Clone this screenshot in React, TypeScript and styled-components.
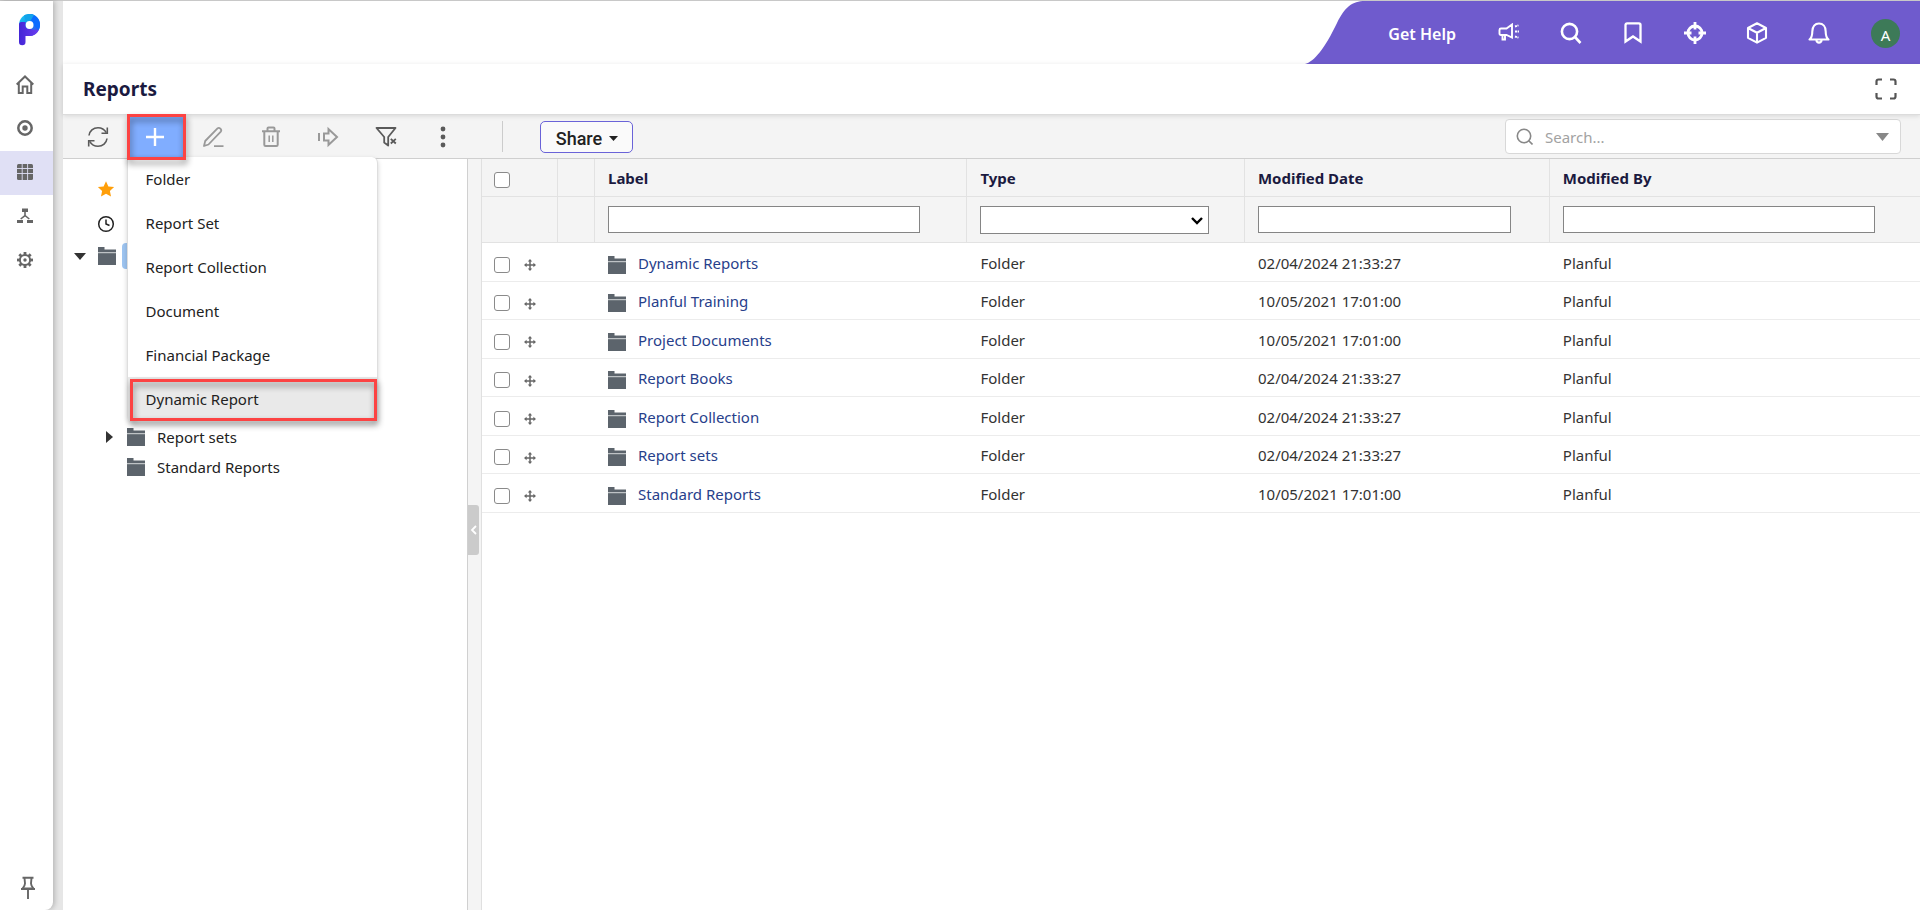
import React from "react";
import styled, { createGlobalStyle, css } from "styled-components";

const GlobalStyle = createGlobalStyle`
  *, *::before, *::after { box-sizing: border-box; }
  html, body, #root { height: 100%; }
  body {
    margin: 0;
    background: #fff;
    color: #222;
    font: 15px/20px "Noto Sans", "Open Sans", sans-serif;
  }
  button, input, select { font: inherit; color: inherit; }
  button { padding: 0; border: 0; background: none; cursor: pointer; }
  svg { display: block; flex: none; }
`;

const Shell = styled.div`
  display: flex;
  min-height: 100%;
  border-top: 1px solid #c8c8c8;
  background: #e6e6e6;
`;

const Rail = styled.nav`
  display: flex;
  flex-direction: column;
  flex: none;
  width: 53px;
  margin-right: 10px;
  background: #fff;
  border-bottom-right-radius: 8px;
  box-shadow: 2px 0 5px rgba(0, 0, 0, 0.2);
`;

const Logo = styled.a`
  display: flex;
  height: 62px;
  padding: 13px 0 0 19px;
`;

const RailButton = styled.button<{ $active?: boolean }>`
  display: flex;
  align-items: center;
  justify-content: center;
  height: 44px;
  padding: 0 4px 2px 0;
  color: #666;
  background: ${(p) => (p.$active ? "#e0e0f5" : "transparent")};
`;

const PinButton = styled(RailButton)`
  margin-top: auto;
  padding: 0 0 0 3px;
`;

const Page = styled.div`
  display: flex;
  flex-direction: column;
  flex: 1;
  min-width: 0;
  background: #fff;
`;

const TopBar = styled.header`
  display: flex;
  justify-content: flex-end;
  height: 63px;
`;

const Swoosh = styled.svg`
  margin-right: -1px;
`;

const TopActions = styled.div`
  display: flex;
  align-items: center;
  padding: 0 20px 0 24px;
  background: #6f5bcd;
  color: #fff;
`;

const HelpLink = styled.a`
  margin-right: 41px;
  padding-top: 3px;
  color: #fff;
  font-size: 16px;
  font-weight: 600;
  text-decoration: none;
`;

const TopButton = styled.button`
  display: flex;
  align-items: center;
  justify-content: center;
  width: 24px;
  height: 24px;
  margin-right: 38px;
`;

const Avatar = styled.button`
  width: 29px;
  height: 29px;
  margin: 2px 0 0 2px;
  padding-top: 2px;
  border-radius: 50%;
  background: #3d7a58;
`;

const TitleRow = styled.div`
  position: relative;
  display: flex;
  align-items: center;
  justify-content: space-between;
  height: 51px;
  padding: 0 23px 0 20px;
  border-bottom: 1px solid #dcdcdc;
  box-shadow: 0 1px 5px rgba(0, 0, 0, 0.12);
  color: #555;
`;

const Title = styled.h1`
  margin: 0;
  color: #1b1a40;
  font-size: 19px;
  line-height: 24px;
  font-weight: 700;
`;

const Toolbar = styled.div`
  display: flex;
  align-items: center;
  height: 44px;
  padding: 0 19px 0 6px;
  background: #f4f4f4;
  border-bottom: 1px solid #cfcfcf;
`;

const Tools = styled.div`
  display: flex;
  width: 403px;
  height: 43px;
`;

const ToolSlot = styled.div`
  position: relative;
  display: flex;
  flex: 1;
`;

const ToolButton = styled.button<{ $tone?: "dim" | "primary" }>`
  display: flex;
  flex: 1;
  align-items: center;
  justify-content: center;
  color: ${(p) => (p.$tone === "dim" ? "#999" : p.$tone === "primary" ? "#fff" : "#5a5a5a")};
  background: ${(p) => (p.$tone === "primary" ? "#80adff" : "transparent")};
`;

const redFrame = css`
  position: absolute;
  border: 3px solid #fc4343;
  filter: drop-shadow(1px 4px 3px rgba(0, 0, 0, 0.45));
  pointer-events: none;
`;

const AddFrame = styled.span`
  ${redFrame}
  z-index: 3;
  inset: -1px -2px -2px 0;
`;

const ItemFrame = styled.span`
  ${redFrame}
  inset: 2px 0 0 2px;
`;

const Menu = styled.ul`
  position: absolute;
  z-index: 2;
  top: 42px;
  left: 0;
  width: 251px;
  margin: 0;
  padding: 0;
  list-style: none;
  background: #fff;
  border: 1px solid #dedede;
  border-top: 0;
  border-radius: 0 6px 6px 6px;
  box-shadow: 0 2px 5px rgba(0, 0, 0, 0.18);
`;

const MenuItem = styled.li<{ $hot?: boolean }>`
  position: relative;
  background: ${(p) => (p.$hot ? "#e9e9e9" : "transparent")};
`;

const MenuButton = styled.button`
  width: 100%;
  height: 44px;
  padding: 0 18px;
  text-align: left;
  color: #222;
`;

const Divider = styled.span`
  width: 1px;
  height: 31px;
  margin: 0 37px 0 30px;
  background: #ccc;
`;

const ShareButton = styled.button`
  display: flex;
  align-items: center;
  justify-content: center;
  gap: 7px;
  width: 93px;
  height: 32px;
  padding: 4px 0 0 1px;
  border: 1px solid #6a63d8;
  border-radius: 5px;
  background: #fafafa;
  color: #222;
  font-family: Roboto, sans-serif;
  font-size: 18px;
  font-weight: 500;
`;

const SearchBox = styled.label`
  display: flex;
  align-items: center;
  gap: 12px;
  width: 396px;
  height: 35px;
  margin-left: auto;
  padding: 0 11px 0 10px;
  border: 1px solid #d8d8d8;
  border-radius: 4px;
  background: #fff;
  color: #888;
`;

const SearchInput = styled.input`
  flex: 1;
  min-width: 0;
  padding: 0;
  border: 0;
  outline: 0;
  background: none;
  &::placeholder { color: #a2a2a2; opacity: 1; }
`;

const Body = styled.main`
  display: flex;
  flex: 1;
`;

const TreePane = styled.aside`
  flex: none;
  width: 404px;
  padding-top: 12px;
`;

const Shortcut = styled.button`
  display: flex;
  align-items: center;
  height: 35px;
  padding-left: 34px;
`;

const Tree = styled.ul`
  margin: 0;
  padding: 0;
  list-style: none;
`;

const Branch = styled(Tree)`
  padding-top: 151px;
`;

const TreeRow = styled.div<{ $depth: number }>`
  display: flex;
  align-items: center;
  height: 30px;
  padding-left: ${(p) => 11 + p.$depth * 29}px;
`;

const Twisty = styled.button`
  display: flex;
  align-items: center;
  justify-content: center;
  width: 12px;
  height: 20px;
  margin-right: 12px;
  color: #333;
`;

const TreeLabel = styled.span`
  margin-left: 6px;
  padding: 3px 6px;
`;

const SelectedMark = styled.span`
  width: 70px;
  height: 26px;
  margin-left: 6px;
  border-radius: 4px;
  background: #9ec5f1;
`;

const Splitter = styled.div`
  display: flex;
  align-items: center;
  flex: none;
  width: 15px;
  border: solid #d0d0d0;
  border-width: 0 1px;
  border-right-color: #e0e0e0;
  background: #f4f4f4;
`;

const Collapse = styled.button`
  display: flex;
  align-items: center;
  justify-content: center;
  width: 11px;
  height: 50px;
  margin-bottom: 9px;
  border-radius: 0 3px 3px 0;
  background: #cbcbcb;
  color: #fff;
`;

const GridPane = styled.section`
  flex: 1;
  min-width: 0;
`;

const Table = styled.table`
  width: 100%;
  table-layout: fixed;
  border-spacing: 0;
`;

const Col = styled.col<{ $w?: string }>`
  width: ${(p) => p.$w ?? "auto"};
`;

const HeadCell = styled.th`
  height: 38px;
  padding: 0 13px;
  background: #f4f4f4;
  border: solid #e2e2e2;
  border-width: 0 1px 1px 0;
  color: #1b1a40;
  text-align: left;
  font-weight: 700;
  line-height: 20px;
  &:first-child { padding-left: 12px; }
  &:last-child { border-right: 0; }
`;

const FilterCell = styled.td<{ $end?: number }>`
  height: 46px;
  padding: 0 ${(p) => p.$end ?? 12}px 0 13px;
  background: #f4f4f4;
  border: solid #e2e2e2;
  border-width: 0 1px 1px 0;
  vertical-align: middle;
  &:last-child { border-right: 0; }
`;

const field = css`
  display: block;
  width: 100%;
  border: 1px solid #858585;
  border-radius: 0;
  background: #fff;
`;

const FilterInput = styled.input`
  ${field}
  height: 27px;
  padding: 0 4px;
`;

const SelectWrap = styled.div`
  position: relative;
  color: #000;

  svg {
    position: absolute;
    top: 11px;
    right: 6px;
    pointer-events: none;
  }
`;

const FilterSelect = styled.select`
  ${field}
  appearance: none;
  height: 28px;
`;

const Row = styled.tr`
  height: 38px;
  &:nth-child(odd) { height: 39px; }
`;

const Cell = styled.td`
  padding: 1px 13px 0;
  border-bottom: 1px solid #ececec;
  color: #333;
  &:first-child { padding-left: 12px; }
`;

const CellFlex = styled.div<{ $gap: number }>`
  display: flex;
  align-items: center;
  gap: ${(p) => p.$gap}px;
`;

const Check = styled.input`
  display: block;
  appearance: none;
  width: 16px;
  height: 16px;
  margin: 4px 0 0;
  border: 1px solid #8a8a8a;
  border-radius: 3px;
  background: #fff;
`;

const RowLink = styled.a`
  color: #27408b;
  text-decoration: none;
`;

const MoveHandle = styled.span`
  padding-top: 5px;
  color: #666;
`;

const FolderSlot = styled.span`
  padding-top: 4px;
`;

const Svg = ({ w = 20, h = w, box, sw = 2, children }: { w?: number; h?: number; box?: string; sw?: number; children: React.ReactNode }) => (
  <svg width={w} height={h} viewBox={box ?? `0 0 ${w} ${h}`} fill="none" stroke="currentColor" strokeWidth={sw} aria-hidden="true">
    {children}
  </svg>
);

const FolderIcon = () => (
  <svg width="18" height="18" viewBox="0 0 18 18" aria-hidden="true">
    <path d="M0 0h6.5v2.5H18v15.5H0z" fill="#5c646c" />
    <path d="M0 5.700h18" stroke="#d5d8da" />
  </svg>
);

const CaretDown = ({ w, h }: { w: number; h: number }) => (
  <svg width={w} height={h} viewBox="0 0 10 6" preserveAspectRatio="none" aria-hidden="true">
    <path d="M0 0h10L5 6z" fill="currentColor" />
  </svg>
);

const MoveIcon = () => (
  <Svg w={12} box="0 0 12 12" sw={1.5}>
    <path d="M6 1v10M1 6h10" />
    <path d="M6 0l2.200 2.600H3.800zM6 12l2.200-2.600H3.800zM0 6l2.600-2.200v4.400zM12 6L9.400 3.800v4.400z" fill="currentColor" stroke="none" />
  </Svg>
);

const LogoMark = () => (
  <svg width="22" height="32" viewBox="0 0 22 32" aria-hidden="true">
    <defs>
      <linearGradient id="ring" x1="0" y1="0" x2="1" y2="1">
        <stop offset="0" stopColor="#1fd0ee" />
        <stop offset="0.5" stopColor="#0c8df5" />
        <stop offset="1" stopColor="#5a2be8" />
      </linearGradient>
      <linearGradient id="stem" x1="0" y1="0" x2="1" y2="0">
        <stop offset="0" stopColor="#4326d6" />
        <stop offset="1" stopColor="#6a3cf0" />
      </linearGradient>
    </defs>
    <path d="M0 11C0 4.500 4.800 0 10.500 0S21 4.800 21 10.800 16.500 22 10.500 22z" fill="url(#ring)" />
    <path d="M11 0c5.500.3 10 4.800 10 10.800 0 2-.5 3.800-1.300 5.200L14 11 8 7.500z" fill="#0b6bff" />
    <path d="M5 1.500C8 0 12-.5 15 1L11 7.500 7 8z" fill="#12a3ea" />
    <path d="M0 10.500C0 8.600 1.600 8 3.200 8h3.300v4.500A4.200 4.200 0 0 0 10.500 15c3 0 5 2 9.200 1C17.800 20 14.500 22 10.500 22H6.500v6a3.200 3.200 0 0 1-6.500 0z" fill="url(#stem)" />
    <circle cx="10.600" cy="11" r="3.900" fill="#fff" />
  </svg>
);

const gearTeeth = [0, 45, 90, 135, 180, 225, 270, 315];

const railItems = [
  { name: "Home", icon: (
    <Svg w={18} h={19} sw={2}>
      <path d="M.7 9.500L9 1.500l8.300 8M2.800 8v10h3.900v-6.500h4.600V18h3.900V8" />
    </Svg>
  ) },
  { name: "Tasks", icon: (
    <Svg w={16} sw={2.500}>
      <circle cx="8" cy="8" r="6.700" />
      <circle cx="8" cy="8" r="2.700" fill="currentColor" stroke="none" />
    </Svg>
  ) },
  { name: "Reports", active: true, icon: (
    <svg width="16" height="16" viewBox="0 0 16 16" aria-hidden="true">
      <rect width="16" height="16" rx="1.500" fill="#666" />
      <path d="M0 4.500h16M0 9.500h16M5.200 0v16M10.600 0v16" stroke="#e0e0f5" strokeWidth=".9" />
    </svg>
  ) },
  { name: "Structure", icon: (
    <Svg w={16} h={16}>
      <path d="M5 .5h6v3.500H5zM0 12h6v3H0zM10 12h6v3h-6z" fill="currentColor" stroke="none" />
      <path d="M8 4v3.500L3.700 11M8 7.500l4.300 3.500" strokeWidth="1.600" />
    </Svg>
  ) },
  { name: "Settings", icon: (
    <Svg w={16}>
      <circle cx="8" cy="8" r="5.100" strokeWidth="2" />
      <circle cx="8" cy="8" r="1.700" fill="currentColor" stroke="none" />
      {gearTeeth.map((a) => <path key={a} d="M8 0v3" strokeWidth="2.800" transform={`rotate(${a} 8 8)`} />)}
    </Svg>
  ) },
];

const topItems = [
  { name: "Announcements", icon: (
    <Svg w={22} h={20} sw={1.900}>
      <path d="M14 1.500v13L8.500 12H3c-1 0-1.500-.5-1.500-1.500V7c0-1 .5-1.500 1.500-1.500h5.500zM4.500 12v4.500h2.500V12" />
      <path d="M17 3.500l3.500-1.200M17 8.500h4M17 13.500l3.500 1.200" strokeDasharray="2 .6" />
    </Svg>
  ) },
  { name: "Search", icon: (
    <Svg w={22} sw={2.600}>
      <circle cx="9.500" cy="9.500" r="7.600" />
      <path d="M14.500 14.500l6 6.500" />
    </Svg>
  ) },
  { name: "Bookmarks", icon: (
    <Svg w={18} h={22} sw={2.300}>
      <path d="M1.500 19.500V3c0-1 .6-1.600 1.600-1.600h11.800c1 0 1.600.6 1.600 1.600v16.500L9 14.500z" />
    </Svg>
  ) },
  { name: "Target", icon: (
    <Svg w={22} sw={2.800}>
      <circle cx="11" cy="11" r="7" />
      <path d="M11 0v7.500M11 14.500V22M0 11h7.500M14.500 11H22" />
    </Svg>
  ) },
  { name: "Models", icon: (
    <Svg w={22} sw={2.100}>
      <path d="M11 1.300l9 4.700v9.800l-9 4.900-9-4.900V6zM2 6l9 4.800L20 6M11 10.800v9.900" strokeLinejoin="round" />
    </Svg>
  ) },
  { name: "Notifications", icon: (
    <Svg w={22} sw={2.100}>
      <path d="M1.500 17.500c2-1.500 2.800-3.500 2.800-8 0-5 2.700-8 6.700-8s6.700 3 6.700 8c0 4.500.8 6.500 2.800 8z" strokeLinejoin="round" />
      <path d="M8.300 18c.3 1.700 1.300 2.600 2.700 2.600s2.400-.9 2.700-2.600" />
    </Svg>
  ) },
];

const laterTools = [
  { name: "Edit", tone: "dim" as const, icon: (
    <Svg w={22} sw={1.800}>
      <path d="M2 20l1.200-5L15.500 2.400c1.800-1.500 4.800 1.200 3.300 3.200L6.500 18.500zM12 20.200h9.500" strokeLinejoin="round" />
    </Svg>
  ) },
  { name: "Delete", tone: "dim" as const, icon: (
    <Svg w={20} h={22} sw={2}>
      <path d="M1 5.300h18M6.500 5V2.500c0-.6.400-1 1-1h5c.6 0 1 .4 1 1V5M3.300 5.300V18.800c0 .8.500 1.300 1.300 1.300h10.800c.8 0 1.300-.5 1.300-1.300V5.300" />
      <path d="M8.200 9.500v6.500M11.800 9.500v6.500" strokeWidth="1.500" />
    </Svg>
  ) },
  { name: "Move", tone: "dim" as const, icon: (
    <Svg w={22} h={22} sw={2}>
      <path d="M2 7v8M7 7.500v7h4.500v4.500l8.500-8-8.500-8v4.500z" />
    </Svg>
  ) },
  { name: "Clear filter", icon: (
    <Svg w={22} sw={1.800}>
      <path d="M1.500 2h19L13.200 11v8.500l-4-3V11z" strokeLinejoin="round" />
      <path d="M15.800 12.800l5 4.700M20.800 12.800l-5 4.700" />
    </Svg>
  ) },
  { name: "More", icon: (
    <svg width="6" height="22" viewBox="0 0 6 22" fill="currentColor" aria-hidden="true">
      <circle cx="3" cy="3" r="2.400" /><circle cx="3" cy="11" r="2.400" /><circle cx="3" cy="19" r="2.400" />
    </svg>
  ) },
];

const menuItems = ["Folder", "Report Set", "Report Collection", "Document", "Financial Package", "Dynamic Report"];

const branch = [
  { label: "Report sets", expandable: true },
  { label: "Standard Reports", expandable: false },
];

const folders = [
  { label: "Dynamic Reports", date: "02/04/2024 21:33:27" },
  { label: "Planful Training", date: "10/05/2021 17:01:00" },
  { label: "Project Documents", date: "10/05/2021 17:01:00" },
  { label: "Report Books", date: "02/04/2024 21:33:27" },
  { label: "Report Collection", date: "02/04/2024 21:33:27" },
  { label: "Report sets", date: "02/04/2024 21:33:27" },
  { label: "Standard Reports", date: "10/05/2021 17:01:00" },
];

export default function App() {
  return (
    <>
      <GlobalStyle />
      <Shell>
        <Rail aria-label="Main">
          <Logo href="#" aria-label="Planful"><LogoMark /></Logo>
          {railItems.map((item) => (
            <RailButton key={item.name} $active={item.active} aria-label={item.name}>{item.icon}</RailButton>
          ))}
          <PinButton aria-label="Pin navigation">
            <Svg w={14} h={24} sw={1.900}>
              <path d="M1.500 1.700h11M3.500 2l.5 5.500c0 2-1.200 3.500-2.500 5h11C11.200 11 10 9.500 10 7.500l.5-5.500M0 13h14M7 13v10" />
            </Svg>
          </PinButton>
        </Rail>

        <Page>
          <TopBar>
            <Swoosh width="60" height="63" viewBox="0 0 60 63" aria-hidden="true">
              <path d="M60 0C47 0 40 6 32 22 20 47 9 61 0 63H60z" fill="#6f5bcd" />
            </Swoosh>
            <TopActions>
              <HelpLink href="#">Get Help</HelpLink>
              {topItems.map((item) => (
                <TopButton key={item.name} aria-label={item.name}>{item.icon}</TopButton>
              ))}
              <Avatar aria-label="Account">A</Avatar>
            </TopActions>
          </TopBar>

          <TitleRow>
            <Title>Reports</Title>
            <button aria-label="Full screen">
              <Svg w={22} sw={2.200}>
                <path d="M1.500 7V3.500c0-1.200.8-2 2-2H7M15 1.500h3.500c1.200 0 2 .8 2 2V7M20.500 15v3.500c0 1.200-.8 2-2 2H15M7 20.500H3.500c-1.200 0-2-.8-2-2V15" />
              </Svg>
            </button>
          </TitleRow>

          <Toolbar>
            <Tools>
              <ToolSlot>
                <ToolButton aria-label="Refresh">
                  <Svg w={22} sw={1.600}>
                    <path d="M2 9.500C2.500 5 6.300 1.700 11 1.700c3.500 0 6.500 1.800 8.300 5M20 12.500c-.5 4.500-4.300 7.800-9 7.800-3.500 0-6.500-1.800-8.300-5" />
                    <path d="M20.300 1.500v5.800h-5.800M1.700 20.500v-5.800h5.800" />
                  </Svg>
                </ToolButton>
              </ToolSlot>
              <ToolSlot>
                <ToolButton $tone="primary" aria-label="Add" aria-expanded="true">
                  <Svg w={18} sw={2.400}><path d="M9 0v18M0 9h18" /></Svg>
                </ToolButton>
                <AddFrame />
                <Menu>
                  {menuItems.map((label) => {
                    const hot = label === "Dynamic Report";
                    return (
                      <MenuItem key={label} $hot={hot}>
                        <MenuButton>{label}</MenuButton>
                        {hot && <ItemFrame />}
                      </MenuItem>
                    );
                  })}
                </Menu>
              </ToolSlot>
              {laterTools.map((tool) => (
                <ToolSlot key={tool.name}>
                  <ToolButton $tone={tool.tone} aria-label={tool.name}>{tool.icon}</ToolButton>
                </ToolSlot>
              ))}
            </Tools>
            <Divider />
            <ShareButton>Share<CaretDown w={9} h={5} /></ShareButton>
            <SearchBox>
              <Svg w={17} sw={1.600}>
                <circle cx="8" cy="8" r="6.700" />
                <path d="M12.500 12.500l4 4" />
              </Svg>
              <SearchInput type="text" placeholder="Search..." aria-label="Search" />
              <CaretDown w={13} h={8} />
            </SearchBox>
          </Toolbar>

          <Body>
            <TreePane aria-label="Folders">
              <Shortcut aria-label="Favorites">
                <svg width="18" height="18" viewBox="0 0 24 24" fill="#ff9f0a" aria-hidden="true">
                  <path d="M12 1.500l3.200 7 7.600.9-5.600 5.200 1.500 7.500L12 18.400l-6.700 3.700 1.500-7.500L1.200 9.400l7.600-.9z" />
                </svg>
              </Shortcut>
              <Shortcut aria-label="Recent">
                <Svg w={18} sw={1.500}>
                  <circle cx="9" cy="9" r="7.300" />
                  <path d="M9 4.500V9l3.500 1.500" />
                </Svg>
              </Shortcut>
              <Tree>
                <li>
                  <TreeRow $depth={0}>
                    <Twisty aria-label="Collapse"><CaretDown w={12} h={7} /></Twisty>
                    <FolderIcon />
                    <SelectedMark />
                  </TreeRow>
                  <Branch>
                    {branch.map((node) => (
                      <li key={node.label}>
                        <TreeRow $depth={1}>
                          <Twisty aria-label="Expand">
                            {node.expandable && <Svg w={7} h={12}><path d="M0 0l7 6-7 6z" fill="currentColor" stroke="none" /></Svg>}
                          </Twisty>
                          <FolderIcon />
                          <TreeLabel>{node.label}</TreeLabel>
                        </TreeRow>
                      </li>
                    ))}
                  </Branch>
                </li>
              </Tree>
            </TreePane>

            <Splitter>
              <Collapse aria-label="Collapse folders">
                <Svg w={7} h={10} sw={1.800}><path d="M6 1L2 5l4 4" /></Svg>
              </Collapse>
            </Splitter>

            <GridPane>
              <Table>
                <colgroup>
                  <Col $w="76px" />
                  <Col $w="37px" />
                  <Col $w="25.9%" />
                  <Col $w="19.3%" />
                  <Col $w="21.2%" />
                  <Col />
                </colgroup>
                <thead>
                  <tr>
                    <HeadCell><Check type="checkbox" aria-label="Select all" /></HeadCell>
                    <HeadCell />
                    <HeadCell>Label</HeadCell>
                    <HeadCell>Type</HeadCell>
                    <HeadCell>Modified Date</HeadCell>
                    <HeadCell>Modified By</HeadCell>
                  </tr>
                  <tr>
                    <FilterCell />
                    <FilterCell />
                    <FilterCell $end={46}><FilterInput type="text" aria-label="Filter by label" /></FilterCell>
                    <FilterCell $end={35}>
                      <SelectWrap>
                        <FilterSelect aria-label="Filter by type"><option value="" /></FilterSelect>
                        <Svg w={12} h={8} sw={2.400}><path d="M1 1l5 5 5-5" /></Svg>
                      </SelectWrap>
                    </FilterCell>
                    <FilterCell $end={38}><FilterInput type="text" aria-label="Filter by modified date" /></FilterCell>
                    <FilterCell $end={45}><FilterInput type="text" aria-label="Filter by modified by" /></FilterCell>
                  </tr>
                </thead>
                <tbody>
                  {folders.map((f) => (
                    <Row key={f.label}>
                      <Cell>
                        <CellFlex $gap={14}>
                          <Check type="checkbox" aria-label={`Select ${f.label}`} />
                          <MoveHandle><MoveIcon /></MoveHandle>
                        </CellFlex>
                      </Cell>
                      <Cell />
                      <Cell>
                        <CellFlex $gap={12}>
                          <FolderSlot><FolderIcon /></FolderSlot>
                          <RowLink href="#">{f.label}</RowLink>
                        </CellFlex>
                      </Cell>
                      <Cell>Folder</Cell>
                      <Cell>{f.date}</Cell>
                      <Cell>Planful</Cell>
                    </Row>
                  ))}
                </tbody>
              </Table>
            </GridPane>
          </Body>
        </Page>
      </Shell>
    </>
  );
}
